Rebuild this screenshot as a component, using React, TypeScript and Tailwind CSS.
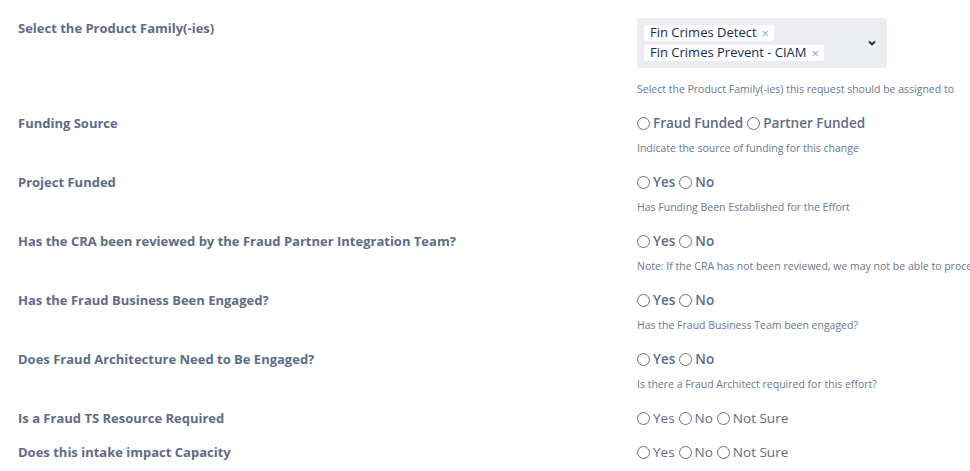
const font = { fontFamily: '"Open Sans", "Segoe UI", sans-serif' };

type Row = {
  label: string;
  options: string[];
  help?: string;
  bold?: boolean;
};

const rows: Row[] = [
  {
    label: "Funding Source",
    options: ["Fraud Funded", "Partner Funded"],
    help: "Indicate the source of funding for this change",
    bold: true,
  },
  {
    label: "Project Funded",
    options: ["Yes", "No"],
    help: "Has Funding Been Established for the Effort",
    bold: true,
  },
  {
    label: "Has the CRA been reviewed by the Fraud Partner Integration Team?",
    options: ["Yes", "No"],
    help: "Note: If the CRA has not been reviewed, we may not be able to proceed with this request until it has been completed",
    bold: true,
  },
  {
    label: "Has the Fraud Business Been Engaged?",
    options: ["Yes", "No"],
    help: "Has the Fraud Business Team been engaged?",
    bold: true,
  },
  {
    label: "Does Fraud Architecture Need to Be Engaged?",
    options: ["Yes", "No"],
    help: "Is there a Fraud Architect required for this effort?",
    bold: true,
  },
  {
    label: "Is a Fraud TS Resource Required",
    options: ["Yes", "No", "Not Sure"],
  },
  {
    label: "Does this intake impact Capacity",
    options: ["Yes", "No", "Not Sure"],
  },
];

function Radio({ text, bold }: { text: string; bold?: boolean }) {
  return (
    <label className="flex items-center gap-[3px] mr-[4px]">
      <span className="w-[13px] h-[13px] rounded-full border border-[#6f6f6f] bg-white" />
      <span className={bold ? "font-semibold" : "font-normal"}>{text}</span>
    </label>
  );
}

function Tag({ text }: { text: string }) {
  return (
    <span className="inline-flex items-center h-[16px] bg-white rounded-[2px] pl-[6px] pr-[5px] text-[13px] text-[#172b4d]">
      {text}
      <span className="ml-[5px] text-[13px] leading-none text-[#8aa2d6]">×</span>
    </span>
  );
}

export default function App() {
  return (
    <main className="w-[970px] h-[471px] overflow-hidden bg-white pt-[18px] pl-[18px]" style={font}>
      <div className="grid grid-cols-[619px_1fr]">
        <div className="text-[13px] leading-[20px] font-bold text-[#5e6c84]">Select the Product Family(-ies)</div>
        <div>
          <div className="w-[250px] h-[50px] bg-[#ebecf0] rounded-[3px] flex items-center justify-between pl-[7px] pr-[10px]">
            <div className="flex flex-col items-start gap-[4px]">
              <Tag text="Fin Crimes Detect" />
              <Tag text="Fin Crimes Prevent - CIAM" />
            </div>
            <svg width="10" height="10" viewBox="0 0 10 10">
              <path d="M2 3.5 L5 6.5 L8 3.5" fill="none" stroke="#172b4d" strokeWidth="1.8" />
            </svg>
          </div>
          <div className="mt-[14px] text-[10.5px] leading-[14px] text-[#6b778c] whitespace-nowrap">
            Select the Product Family(-ies) this request should be assigned to
          </div>
        </div>
      </div>

      {rows.map((r, i) => (
        <div
          key={r.label}
          className={`grid grid-cols-[619px_1fr] ${i > 0 && !rows[i - 1].help ? "mt-[14px]" : "mt-[17px]"}`}
        >
          <div className="text-[13px] leading-[20px] font-bold text-[#5e6c84]">{r.label}</div>
          <div className="min-w-0">
            <div className="flex items-center text-[13.5px] leading-[20px] text-[#5e6c84]">
              {r.options.map((o) => (
                <Radio key={o} text={o} bold={r.bold} />
              ))}
            </div>
            {r.help && (
              <div className="mt-[8px] text-[10.5px] leading-[14px] text-[#6b778c] whitespace-nowrap">{r.help}</div>
            )}
          </div>
        </div>
      ))}
    </main>
  );
}
